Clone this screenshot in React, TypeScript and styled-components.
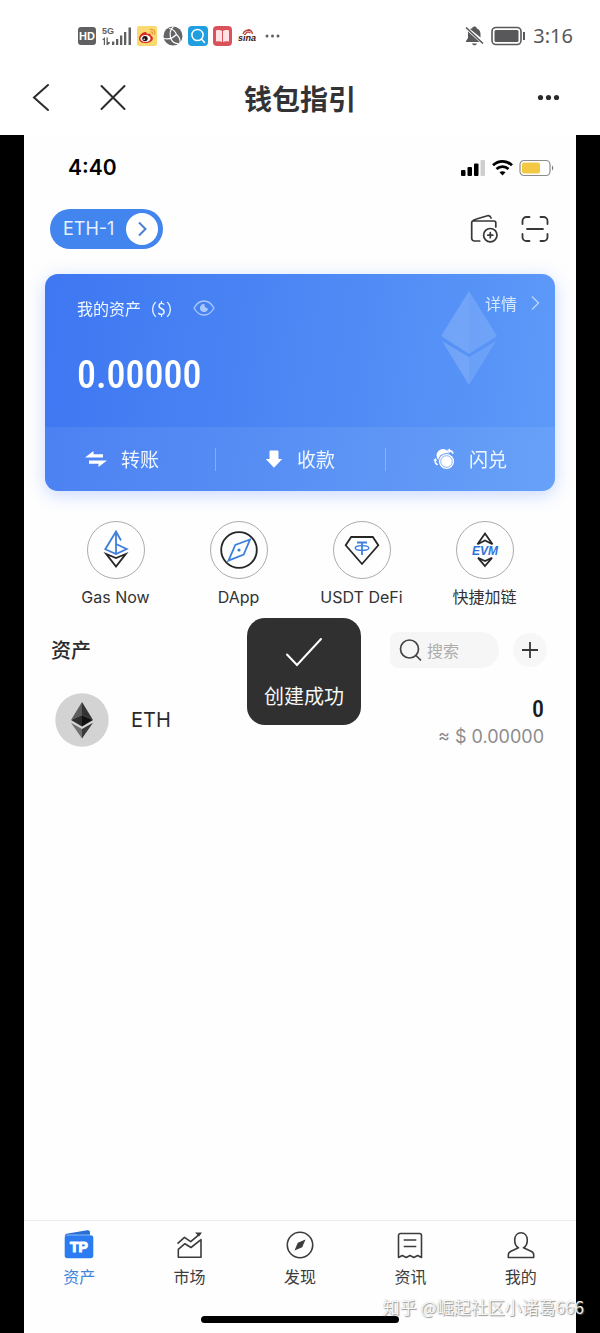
import React from "react";
import styled, { createGlobalStyle } from "styled-components";

const cjk = `"Noto Sans CJK SC", sans-serif`;
const numeric = `"Roboto Condensed", "Noto Sans CJK SC", sans-serif`;

const GlobalStyle = createGlobalStyle`
  *, *::before, *::after { box-sizing: border-box; }
  body { margin: 0; background: #fff; font-family: Inter, ${cjk}; color: #2a2a2c; }
  h1, h2, p, ul { margin: 0; padding: 0; }
  ul { list-style: none; }
  button { border: 0; padding: 0; background: none; font: inherit; color: inherit; cursor: pointer; }
  a { color: inherit; text-decoration: none; }
  svg { display: block; flex: none; }
`;

const Page = styled.div`
  position: relative;
  display: flex;
  flex-direction: column;
  min-height: 100vh;
`;

const DeviceStatus = styled.div`
  display: flex;
  align-items: center;
  justify-content: space-between;
  height: 61px;
  padding: 11px 27px 0 78px;
  color: #58585a;
`;

const IconGroup = styled.div<{ $gap: number }>`
  display: flex;
  align-items: center;
  gap: ${(p) => p.$gap}px;
`;

const DeviceTime = styled.span`
  font-family: "Noto Sans", sans-serif;
  font-size: 20px;
  line-height: 26px;
`;

const NavBar = styled.header`
  display: grid;
  grid-template-columns: 1fr auto 1fr;
  align-items: center;
  height: 74px;
  padding: 0 32px;
`;

const NavTitle = styled.h1`
  font-family: ${cjk};
  font-size: 28px;
  line-height: 40px;
  font-weight: 700;
  color: #333335;
`;

const NavEnd = styled.div`
  display: flex;
  justify-content: flex-end;
  padding-right: 8px;
`;

const Frame = styled.main`
  flex: 1;
  display: flex;
  padding: 0 24px;
  background: #000;
`;

const Phone = styled.div`
  position: relative;
  flex: 1;
  display: flex;
  flex-direction: column;
  min-width: 0;
  background: #fefefe;
`;

const PhoneStatus = styled.div`
  display: flex;
  align-items: center;
  justify-content: space-between;
  height: 66px;
  padding: 0 22px 0 44px;
`;

const PhoneTime = styled.span`
  font-size: 21px;
  line-height: 28px;
  font-weight: 600;
  color: #000;
`;

const WalletBar = styled.div`
  display: flex;
  align-items: center;
  justify-content: space-between;
  margin-top: 8px;
  padding: 0 27px 0 26px;
`;

const WalletPill = styled.button`
  display: flex;
  align-items: center;
  gap: 12px;
  height: 40px;
  padding: 0 5px 0 13px;
  border-radius: 20px;
  background: #4285ee;
  color: #e6f1ff;
  font-size: 18px;
  line-height: 24px;
`;

const PillArrow = styled.span`
  display: grid;
  place-items: center;
  width: 32px;
  height: 32px;
  border-radius: 50%;
  background: #fff;
`;

const Card = styled.section`
  position: relative;
  margin: 25px 21px 0;
  border-radius: 13px;
  overflow: hidden;
  background: linear-gradient(97deg, #3e77f2 0%, #4b86f4 45%, #5d9af8 100%);
  color: #f0f7ff;
`;

const CardShadow = styled.div`
  display: flow-root;
  filter: drop-shadow(0 4px 9px rgba(110, 155, 255, 0.38));
`;

const CardMark = styled.svg`
  position: absolute;
  top: 17px;
  right: 58px;
`;

const CardBody = styled.div`
  position: relative;
  padding: 18px 15px 28px 32px;
`;

const CardHead = styled.div`
  display: flex;
  align-items: flex-start;
  justify-content: space-between;
`;

const BalanceLabel = styled.div`
  display: flex;
  align-items: center;
  gap: 11px;
  font-family: ${cjk};
  font-size: 16px;
  line-height: 32px;
`;

const DetailLink = styled.a`
  display: flex;
  align-items: center;
  gap: 14px;
  font-family: ${cjk};
  font-size: 16px;
  line-height: 22px;
  color: #d6e8ff;
`;

const Amount = styled.p`
  margin-top: 27px;
  font-family: ${numeric};
  font-size: 38px;
  line-height: 48px;
  font-weight: 500;
  color: #fff;
`;

const Actions = styled.div`
  display: grid;
  grid-template-columns: repeat(3, 1fr);
  height: 64px;
  background: rgba(255, 255, 255, 0.07);
`;

const Action = styled.button`
  position: relative;
  display: flex;
  align-items: center;
  justify-content: center;
  gap: 14px;
  font-family: ${cjk};
  font-size: 19px;
  line-height: 28px;

  &:first-child {
    padding-right: 16px;
  }

  & + &::before {
    content: "";
    position: absolute;
    left: 0;
    top: 21px;
    height: 23px;
    border-left: 1px solid rgba(255, 255, 255, 0.28);
  }
`;

const Shortcuts = styled.nav`
  display: grid;
  grid-template-columns: repeat(4, 1fr);
  margin-top: 30px;
  padding: 0 30px;
`;

const Shortcut = styled.a`
  display: flex;
  flex-direction: column;
  align-items: center;
  gap: 8px;
  font-size: 16px;
  line-height: 20px;
  white-space: nowrap;
  color: #333;
`;

const ShortcutIcon = styled.span`
  display: grid;
  place-items: center;
  width: 58px;
  height: 58px;
  border: 1px solid #acacac;
  border-radius: 50%;
`;

const AssetsHead = styled.div`
  display: flex;
  align-items: center;
  margin-top: 25px;
  padding: 0 29px 0 27px;
`;

const AssetsTitle = styled.h2`
  flex: 1;
  font-family: ${cjk};
  font-size: 20px;
  line-height: 36px;
  font-weight: 500;
`;

const SearchBox = styled.label`
  display: flex;
  align-items: center;
  gap: 5px;
  width: 109px;
  height: 36px;
  margin-right: 14px;
  padding: 0 8px 0 9px;
  border-radius: 8px 18px 18px 8px;
  background: #f6f6f6;
`;

const SearchInput = styled.input`
  flex: 1;
  min-width: 0;
  width: 0;
  padding: 0;
  border: 0;
  outline: 0;
  background: none;
  font-family: ${cjk};
  font-size: 16px;
  line-height: 24px;

  &::placeholder {
    color: #acacac;
    opacity: 1;
  }
`;

const AddButton = styled.button`
  display: grid;
  place-items: center;
  width: 34px;
  height: 34px;
  border-radius: 50%;
  background: #f7f7f7;
`;

const TokenRow = styled.li`
  display: flex;
  align-items: center;
  gap: 22px;
  margin-top: 21px;
  padding: 0 32px 0 31px;
`;

const TokenName = styled.span`
  flex: 1;
  font-size: 20px;
  line-height: 28px;
`;

const TokenValues = styled.div`
  padding-top: 6px;
  text-align: right;
  line-height: 28px;
`;

const TokenAmount = styled.p`
  font-family: ${numeric};
  font-weight: 500;
  font-size: 24px;
  color: #1c1c1e;
`;

const TokenFiat = styled.p`
  font-size: 18px;
  color: #8c8c8e;
`;

const Toast = styled.div`
  position: absolute;
  top: 483px;
  left: 50%;
  margin-left: -53px;
  display: flex;
  flex-direction: column;
  align-items: center;
  gap: 13px;
  width: 114px;
  padding: 19px 0 14px;
  border-radius: 18px;
  background: #303030;
  color: #f6f6f6;
  font-family: ${cjk};
  font-size: 20px;
  line-height: 30px;
`;

const BottomBar = styled.footer`
  margin-top: auto;
  padding-bottom: 10px;
  border-top: 1px solid #ececec;
`;

const Tabs = styled.nav`
  display: grid;
  grid-template-columns: repeat(5, 1fr);
  padding-top: 9px;
`;

const Tab = styled.a<{ $active?: boolean }>`
  display: flex;
  flex-direction: column;
  align-items: center;
  gap: 6px;
  font-family: ${cjk};
  font-size: 16px;
  line-height: 20px;
  color: ${(p) => (p.$active ? "#4184dc" : "#3c3c3e")};
`;

const HomeIndicator = styled.div`
  width: 198px;
  height: 7px;
  margin: 30px auto 0;
  border-radius: 4px;
  background: #000;
`;

const Watermark = styled.span`
  position: absolute;
  right: 16px;
  bottom: 13px;
  font-family: ${cjk};
  font-size: 17px;
  line-height: 26px;
  color: rgba(255, 255, 255, 0.92);
  text-shadow: 1px 1px 1px rgba(110, 110, 110, 0.7), 0 0 1px rgba(130, 130, 130, 0.5);
  white-space: nowrap;
`;

const svgFont = { fontFamily: "Liberation Sans, sans-serif", fontWeight: 700 };

const NotificationIcons = () => (
  <IconGroup $gap={5}>
    <svg width="19" height="20" viewBox="0 0 19 20">
      <rect x="0" y="1" width="18" height="18" rx="3" fill="#606062" />
      <text x="9" y="14" textAnchor="middle" fontSize="11" fill="#fff" style={svgFont}>HD</text>
    </svg>
    <svg width="30" height="22" viewBox="0 0 30 22" fill="#606062">
      <text x="0" y="9" fontSize="9" style={svgFont}>5G</text>
      <path d="M0 15l3-3v8H1.800v-5zM4.500 12.500h1.300v4.500h2v1.200L5.800 20H4.500zM10 16.500h2.300V20H10zM14 14h2.300v6H14zM18 10.500h2.300V20H18zM22 7h2.300v13H22zM26.500 2.500h2.500V20h-2.500z" />
    </svg>
    <svg width="21" height="20" viewBox="0 0 21 20">
      <rect x="0" y="0" width="20" height="20" rx="2" fill="#fbd971" />
      <path d="M2 12.500C2 9 6.500 5.500 9 6.200c1 .3.9 1.200.7 2 2.300-.9 4.700-.6 4 1.500 1.300.3 2.200 1.200 2.200 2.600 0 2.900-3.500 4.900-7.200 4.900S2 15.500 2 12.500z" fill="#d82b26" />
      <ellipse cx="8.500" cy="12.500" rx="5" ry="3.600" fill="#fff" />
      <circle cx="8" cy="12.600" r="2.700" fill="#1c1413" />
      <circle cx="7.200" cy="13.200" r=".8" fill="#fff" />
      <path d="M13 3.400c3.300-.6 5.800 2.200 4.800 5.400M13.400 5.800c1.600-.2 2.700 1 2.200 2.600" fill="none" stroke="#e8983a" strokeWidth="1.200" />
    </svg>
    <svg width="20" height="20" viewBox="0 0 20 20">
      <circle cx="10" cy="10" r="9.500" fill="#646466" />
      <path d="M10.500 .5C7.500 3 6.500 7 7.500 12M.8 12.500C5 13.500 10 12 13.500 8.500M13.500 8.500C16 10.500 17.500 13 17 17M6 2.500C10 3 12.500 5.500 13.500 8.500M7.500 12C9 15.500 12 17.800 15.500 17.500" fill="none" stroke="#fff" strokeWidth="1.200" />
    </svg>
    <svg width="20" height="20" viewBox="0 0 20 20">
      <rect width="20" height="20" rx="4" fill="#1f9fe0" />
      <circle cx="9.500" cy="9" r="5.600" fill="none" stroke="#fff" strokeWidth="1.500" />
      <path d="M13.500 13l3 3.500" stroke="#fff" strokeWidth="1.500" strokeLinecap="round" />
    </svg>
    <svg width="20" height="20" viewBox="0 0 20 20">
      <rect x="0" y="0" width="19" height="20" rx="4" fill="#d9525a" />
      <path d="M3 4.500c2.500-.8 4.500-.6 6 .4v11c-1.500-.9-3.500-.9-6-.3zM16 4.500c-2.500-.8-4.500-.6-6 .4v11c1.500-.9 3.500-.9 6-.3z" fill="#ffe3e6" />
    </svg>
    <svg width="21" height="20" viewBox="0 0 21 20">
      <path d="M5 8c1-3.500 5-5 9-2.500M7.500 8c1-2 3-2.500 5-1M9.500 4c1.500-.8 4.500.5 5 4" fill="none" stroke="#b9433e" strokeWidth="1.400" />
      <text x="0" y="14.500" fontSize="9" fontStyle="italic" fill="#3c1414" style={svgFont}>sina</text>
    </svg>
    <svg width="18" height="20" viewBox="0 0 18 20" fill="#606062">
      <circle cx="3" cy="10" r="1.500" /><circle cx="8.500" cy="10" r="1.500" /><circle cx="14" cy="10" r="1.500" />
    </svg>
  </IconGroup>
);

const DeviceIndicators = () => (
  <IconGroup $gap={7}>
    <svg width="19" height="20" viewBox="0 0 19 20" fill="#58585a">
      <path d="M7 2.500C7.500 1 8.500.5 9.500.5s2 .5 2.500 2c2.500 1 3.500 3 3.500 5.500v3.500L5 2.900c.6-.3 1.300-.4 2-.4zM3 5.500L14.500 16H1v-1l2-3zM7 17.500h5c-.3 1-1.300 1.800-2.500 1.800S7.300 18.500 7 17.500z" />
      <path d="M1 1.500l17 16" stroke="#58585a" strokeWidth="1.600" />
    </svg>
    <svg width="35" height="20" viewBox="0 0 35 20">
      <rect x="1" y="1.500" width="29" height="17" rx="4" fill="none" stroke="#58585a" strokeWidth="1.600" />
      <rect x="3.500" y="4" width="24" height="12" rx="1.500" fill="#58585a" />
      <path d="M33 6v8" stroke="#58585a" strokeWidth="2" />
    </svg>
    <DeviceTime>3:16</DeviceTime>
  </IconGroup>
);

const PhoneIndicators = () => (
  <IconGroup $gap={6}>
    <svg width="25" height="18" viewBox="0 0 25 18">
      <rect x="0" y="11" width="4.500" height="6" rx="1" />
      <rect x="6.500" y="8" width="4.500" height="9" rx="1" />
      <rect x="13" y="4.500" width="4.500" height="12.500" rx="1" />
      <rect x="19.500" y="1" width="4.500" height="16" rx="1" fill="#cfcfcf" />
    </svg>
    <svg width="21" height="18" viewBox="0 0 21 18" fill="none" stroke="#000" strokeWidth="2.800">
      <path d="M1 6.300c5.500-5.200 13.500-5.200 19 0M4.500 10c3.500-3.300 8.500-3.300 12 0" />
      <path d="M10.500 16.500l-3-3.200c1.800-1.500 4.200-1.500 6 0z" fill="#000" stroke="none" />
    </svg>
    <svg width="35" height="18" viewBox="0 0 35 18">
      <rect x="1" y="1.500" width="30" height="15" rx="4" fill="#fff" stroke="#8d8d8d" strokeWidth="1.200" />
      <rect x="3" y="3.500" width="18" height="11" rx="2" fill="#f3c944" />
      <path d="M33 6.500c1.600.8 1.600 4.200 0 5z" fill="#777" />
    </svg>
  </IconGroup>
);

const WalletAddIcon = () => (
  <svg width="30" height="30" viewBox="0 0 30 30" fill="none" stroke="#38383a" strokeWidth="1.700" strokeLinecap="round" strokeLinejoin="round">
    <path d="M10.700 27H5.500A2.800 2.800 0 0 1 2.700 24.200V8.600C2.700 7.500 3.400 7 4.500 7H25c1.200 0 1.800.6 1.800 1.800V13M3.200 7.500C4 6 5.500 5.500 7.500 5l11-3.300c1.600-.5 2.800.3 3.600 2.300" />
    <circle cx="21.300" cy="21.200" r="6.700" />
    <path d="M21.300 18.700v5M18.800 21.200h5" />
  </svg>
);

const ScanIcon = () => (
  <svg width="28" height="30" viewBox="0 0 28 30" fill="none" stroke="#38383a" strokeWidth="1.800" strokeLinecap="round">
    <path d="M1.500 10V7a4 4 0 0 1 4-4H8.500M19.500 3h3a4 4 0 0 1 4 4v3M26.500 20v3a4 4 0 0 1-4 4h-3M8.500 27h-3a4 4 0 0 1-4-4v-3M6 15h16" />
  </svg>
);

const EyeIcon = () => (
  <svg width="22" height="18" viewBox="0 0 22 18">
    <path d="M1 9C3.500 4.500 7 2 11 2s7.500 2.500 10 7c-2.500 4.500-6 7-10 7S3.500 13.500 1 9z" fill="none" stroke="#a9c9fb" strokeWidth="1.300" strokeLinejoin="round" />
    <path d="M11.500 5A4 4 0 1 0 15 9.500 3.600 3.600 0 0 1 11.500 5z" fill="#a9c9fb" />
  </svg>
);

const ArrowIcon = ({ color, width }: { color: string; width: number }) => (
  <svg width="9" height="16" viewBox="0 0 9 16" fill="none" stroke={color} strokeWidth={width}>
    <path d="M1 1.500L7.500 8 1 14.500" />
  </svg>
);

const TransferIcon = () => (
  <svg width="22" height="20" viewBox="0 0 22 20" fill="#fff">
    <path d="M0 8.500L8.500 2v3.200H18v3.300zM22 11.500L13.500 18v-3.200H4v-3.300z" />
  </svg>
);

const ReceiveIcon = () => (
  <svg width="18" height="20" viewBox="0 0 18 20" fill="#fff">
    <path d="M4.500 2.500a1 1 0 0 1 1-1h7a1 1 0 0 1 1 1V10h3.700L9 18.700.8 10h3.700z" />
  </svg>
);

const SwapIcon = () => (
  <svg width="22" height="22" viewBox="0 0 22 22" fill="#fff">
    <circle cx="10" cy="7.500" r="6.500" />
    <circle cx="13.500" cy="13.500" r="8.600" fill="#6097f8" />
    <circle cx="13.500" cy="13.500" r="7.600" />
    <circle cx="13.500" cy="13.500" r="5.800" fill="none" stroke="#7aa8f9" strokeWidth=".9" />
    <path d="M14 2l3-1.500v1.200c2 .4 3.300 1.600 3.800 3.800l-1.600.3c-.3-1-1-1.800-2.200-2v1.400zM.2 12.500L2.500 10l1.700 3-1.200-.1c.1 1.600.8 2.600 2.200 3.300L4 17.600c-1.800-1-2.700-2.700-2.700-5z" />
  </svg>
);

const shortcuts = [
  {
    label: "Gas Now",
    icon: (
      <>
        <path d="M5 -9.500L0 -18.500L-10.700 -.8L0 4L10.700 -1L0 -6M0 -18V4" stroke="#3f7fdc" />
        <path d="M-9.700 4L0 8L9.700 4L0 16.500Z" stroke="#262626" />
      </>
    ),
  },
  {
    label: "DApp",
    icon: (
      <>
        <circle r="17.800" stroke="#262626" />
        <path d="M11 -10.500L-3.700 -5L-10.500 10.700L4.700 4.500Z" stroke="#3f7fdc" />
        <circle r="1.600" fill="#3f7fdc" stroke="none" />
      </>
    ),
  },
  {
    label: "USDT DeFi",
    icon: (
      <>
        <path d="M-10.800 -13H10.800L16.300 -4.700L0 14L-16.300 -4.700Z" stroke="#262626" />
        <path d="M-5 -7.500H5M0 -7.500V5" stroke="#3f7fdc" />
        <ellipse cy="-2" rx="6.800" ry="2.400" stroke="#3f7fdc" strokeWidth="1.400" />
      </>
    ),
  },
  {
    label: "快捷加链",
    icon: (
      <>
        <path d="M0 -16.500L7.500 -5.800L0 -9.500L-7.500 -5.800ZM0 16L7 7.800L0 11L-7 7.800Z" stroke="#262626" />
        <text y="5" textAnchor="middle" fontSize="12" fontStyle="italic" fill="#2f73dc" stroke="none" style={svgFont}>EVM</text>
      </>
    ),
  },
];

const tabs = [
  {
    label: "资产",
    icon: (
      <>
        <path d="M.8 6.500C1 4.500 2 3.800 4 3.500L23 .3c2-.3 3 .4 3 2.200v2.300H3.500z" fill="#2a6fd6" stroke="none" />
        <rect x=".7" y="5.300" width="28.600" height="23" rx="2.800" fill="#2b7cf0" stroke="none" />
        <text x="15" y="22" textAnchor="middle" fontSize="14" fill="#fff" stroke="#fff" strokeWidth="1" style={svgFont}>TP</text>
      </>
    ),
  },
  {
    label: "市场",
    icon: (
      <>
        <path d="M2.500 13.700L9.500 7.300L15.700 11.700L25 3.800" />
        <path d="M3.300 19.300L9.900 13.700L16 17.500L26 9.700V27.300H3.300Z" />
        <path d="M20 2.500H27L24 6.500Z" fill="#3c3c3e" stroke="none" />
      </>
    ),
  },
  {
    label: "发现",
    icon: (
      <>
        <circle cx="15" cy="15" r="12.700" />
        <path d="M20.500 9.500L12.800 12.800L9.500 20.500L17.200 17.200Z" fill="#3c3c3e" stroke="none" />
      </>
    ),
  },
  {
    label: "资讯",
    icon: (
      <>
        <path d="M3.500 27.500V5.500a2 2 0 0 1 2-2h19a2 2 0 0 1 2 2v22l-3.800-2-3.900 2-3.800-2-3.800 2-3.900-2z" />
        <path d="M8.700 10H21.300M8.700 16.500H21.300" />
      </>
    ),
  },
  {
    label: "我的",
    icon: (
      <path d="M12.500 17.800C10 16.500 8.700 13 8.700 10 8.700 5.500 11.500 2.700 15 2.700s6.300 2.800 6.300 7.300c0 3-1.300 6.500-3.800 7.800l7.500 3.400c1.500.7 2.700 2 2.700 3.600v2.700H2.300v-2.700c0-1.600 1.200-2.900 2.700-3.600z" />
    ),
  },
];

export default function App() {
  return (
    <Page>
      <GlobalStyle />
      <DeviceStatus>
        <NotificationIcons />
        <DeviceIndicators />
      </DeviceStatus>
      <NavBar>
        <IconGroup $gap={50}>
          <button aria-label="返回">
            <svg width="18" height="30" viewBox="0 0 18 30" fill="none" stroke="#2c2c2e" strokeWidth="2" strokeLinecap="round">
              <path d="M16 2L2 14.500L16 27" />
            </svg>
          </button>
          <button aria-label="关闭">
            <svg width="26" height="30" viewBox="0 0 26 30" fill="none" stroke="#2c2c2e" strokeWidth="2" strokeLinecap="round">
              <path d="M1.500 3L24.500 26M24.500 3L1.500 26" />
            </svg>
          </button>
        </IconGroup>
        <NavTitle>钱包指引</NavTitle>
        <NavEnd>
          <button aria-label="更多">
            <svg width="23" height="8" viewBox="0 0 23 8" fill="#2c2c2e">
              <circle cx="3.500" cy="3.500" r="2.600" /><circle cx="11.500" cy="3.500" r="2.600" /><circle cx="19.500" cy="3.500" r="2.600" />
            </svg>
          </button>
        </NavEnd>
      </NavBar>

      <Frame>
        <Phone>
          <PhoneStatus>
            <PhoneTime>4:40</PhoneTime>
            <PhoneIndicators />
          </PhoneStatus>

          <WalletBar>
            <WalletPill>
              ETH-1
              <PillArrow><ArrowIcon color="#4a7fd6" width={2} /></PillArrow>
            </WalletPill>
            <IconGroup $gap={22}>
              <button aria-label="添加钱包"><WalletAddIcon /></button>
              <button aria-label="扫一扫"><ScanIcon /></button>
            </IconGroup>
          </WalletBar>

          <CardShadow>
            <Card>
              <CardMark width="56" height="94" viewBox="0 0 56 94" fill="#fff">
                <path d="M28 0L0 45L28 63Z" fillOpacity=".17" />
                <path d="M28 0L56 45L28 63Z" fillOpacity=".14" />
                <path d="M1 50L28 66V94Z" fillOpacity=".17" />
                <path d="M55 50L28 66V94Z" fillOpacity=".12" />
              </CardMark>
              <CardBody>
                <CardHead>
                  <BalanceLabel>
                    我的资产（$）
                    <button aria-label="隐藏余额"><EyeIcon /></button>
                  </BalanceLabel>
                  <DetailLink href="#detail">
                    详情
                    <ArrowIcon color="#b5d3fd" width={1.5} />
                  </DetailLink>
                </CardHead>
                <Amount>0.00000</Amount>
              </CardBody>
              <Actions>
                <Action><TransferIcon />转账</Action>
                <Action><ReceiveIcon />收款</Action>
                <Action><SwapIcon />闪兑</Action>
              </Actions>
            </Card>
          </CardShadow>

          <Shortcuts>
            {shortcuts.map((s) => (
              <Shortcut key={s.label} href="#shortcut">
                <ShortcutIcon>
                  <svg width="40" height="40" viewBox="-20 -20 40 40" fill="none" strokeWidth="1.800">{s.icon}</svg>
                </ShortcutIcon>
                {s.label}
              </Shortcut>
            ))}
          </Shortcuts>

          <AssetsHead>
            <AssetsTitle>资产</AssetsTitle>
            <SearchBox>
              <svg width="23" height="24" viewBox="0 0 23 24" fill="none" stroke="#444446" strokeWidth="1.700" strokeLinecap="round">
                <circle cx="10.500" cy="11" r="9" />
                <path d="M17 17.500L21.500 22" />
              </svg>
              <SearchInput type="text" placeholder="搜索" aria-label="搜索" />
            </SearchBox>
            <AddButton aria-label="添加资产">
              <svg width="16" height="16" viewBox="0 0 16 16" stroke="#38383a" strokeWidth="1.800">
                <path d="M8 0V16M0 8H16" />
              </svg>
            </AddButton>
          </AssetsHead>

          <ul>
            <TokenRow>
              <svg width="54" height="54" viewBox="-27 -27 54 54">
                <circle r="26.700" fill="#d3d3d3" />
                <path d="M0 -18L-11 0L0 -5Z" fill="#5c5c5c" />
                <path d="M0 -18L11 0L0 -5Z" fill="#333" />
                <path d="M-11 0L0 -5V6.500Z" fill="#2d2d2d" />
                <path d="M11 0L0 -5V6.500Z" fill="#121212" />
                <path d="M-11 2.800L0 9V18.500Z" fill="#707070" />
                <path d="M11 2.800L0 9V18.500Z" fill="#3a3a3a" />
              </svg>
              <TokenName>ETH</TokenName>
              <TokenValues>
                <TokenAmount>0</TokenAmount>
                <TokenFiat>≈ $ 0.00000</TokenFiat>
              </TokenValues>
            </TokenRow>
          </ul>

          <BottomBar>
            <Tabs>
              {tabs.map((t, i) => (
                <Tab key={t.label} href="#tab" $active={i === 0}>
                  <svg width="30" height="30" viewBox="0 0 30 30" fill="none" stroke="#3c3c3e" strokeWidth="1.600" strokeLinejoin="round">{t.icon}</svg>
                  {t.label}
                </Tab>
              ))}
            </Tabs>
            <HomeIndicator />
          </BottomBar>

          <Toast role="status">
            <svg width="38" height="31" viewBox="0 0 38 31" fill="none" stroke="#fff" strokeWidth="2" strokeLinecap="round">
              <path d="M2 17.500L12 28L36 2" />
            </svg>
            创建成功
          </Toast>
        </Phone>
      </Frame>
      <Watermark>知乎 @崛起社区小诸葛666</Watermark>
    </Page>
  );
}
